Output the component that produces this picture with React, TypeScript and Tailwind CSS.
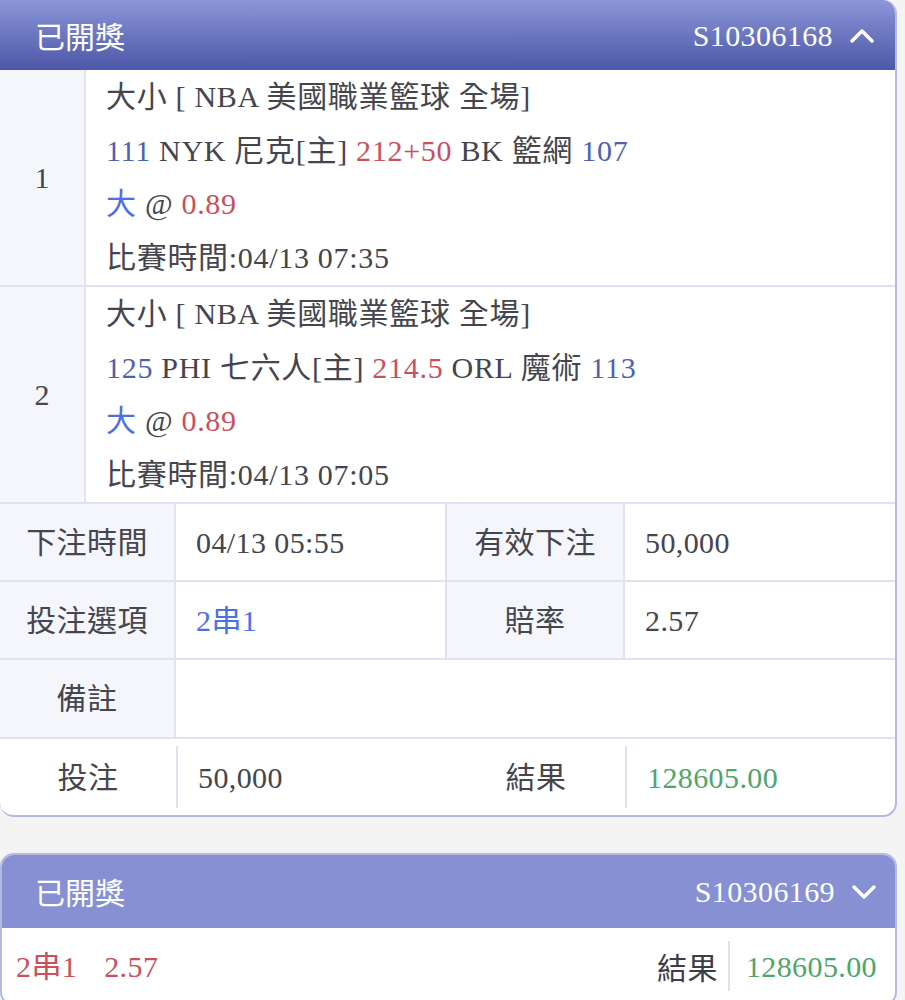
import React from "react";

const F = { fontFamily: '"Liberation Serif", "Noto Sans CJK TC", serif' };
const CJK = { fontFamily: '"Noto Sans CJK TC", sans-serif' };

function Up() {
  return (
    <svg width="26" height="18" viewBox="0 0 26 18" fill="none">
      <path d="M3 15 L13 5 L23 15" stroke="white" strokeWidth="3.5" strokeLinecap="round" strokeLinejoin="round" />
    </svg>
  );
}
function Down() {
  return (
    <svg width="26" height="18" viewBox="0 0 26 18" fill="none">
      <path d="M3 4 L13 14 L23 4" stroke="white" strokeWidth="3.5" strokeLinecap="round" strokeLinejoin="round" />
    </svg>
  );
}

function Match({ n, lines }: { n: string; lines: React.ReactNode[] }) {
  return (
    <div className="flex h-[217px] border-b-2 border-[#dfe1f1]">
      <div className="w-[86px] shrink-0 bg-[#f5f6fb] border-r-2 border-[#e2e4f3] flex items-center justify-center text-[30px] text-[#45454e]">
        {n}
      </div>
      <div className="flex-1 pl-[20px] text-[30px] tracking-[0.7px] text-[#45454e]">
        {lines.map((l, i) => (
          <div key={i} className="h-[53.5px] leading-[53.5px] whitespace-nowrap">{l}</div>
        ))}
      </div>
    </div>
  );
}

const blue = "text-[#4f5fb3]";
const red = "text-[#c9505c]";
const bright = "text-[#4b6fe4]";
const lineImg =
  "[border-image:linear-gradient(to_bottom,transparent_10%,#dfe1f1_10%,#dfe1f1_90%,transparent_90%)_1]";

export default function App() {
  return (
    <div className="min-h-[1000px] bg-[#f4f4f5] pr-[8px] overflow-hidden" style={F}>
      <div className="bg-white rounded-b-[14px] rounded-tr-[14px] border-r-2 border-b-2 border-[#b4b9e0] overflow-hidden">
        <div className="h-[70px] flex items-center justify-between pl-[35px] pr-[20px] bg-gradient-to-b from-[#8c96d8] to-[#4d57a7] text-white">
          <span className="text-[30px]" style={CJK}>已開獎</span>
          <span className="flex items-center gap-[16px] text-[30px] tracking-[0.4px]">S10306168 <Up /></span>
        </div>
        <Match
          n="1"
          lines={[
            <>大小 [ NBA 美國職業籃球 全場]</>,
            <><span className={blue}>111</span> NYK 尼克[主] <span className={red}>212+50</span> BK 籃網 <span className={blue}>107</span></>,
            <><span className={bright}>大</span> @ <span className={red}>0.89</span></>,
            <>比賽時間:04/13 07:35</>,
          ]}
        />
        <Match
          n="2"
          lines={[
            <>大小 [ NBA 美國職業籃球 全場]</>,
            <><span className={blue}>125</span> PHI 七六人[主] <span className={red}>214.5</span> ORL 魔術 <span className={blue}>113</span></>,
            <><span className={bright}>大</span> @ <span className={red}>0.89</span></>,
            <>比賽時間:04/13 07:05</>,
          ]}
        />
        <div className="grid grid-cols-[176px_271px_178px_1fr] text-[30px] tracking-[0.4px] text-[#45454e]">
          <div className="h-[78px] bg-[#f5f6fb] border-r-2 border-b-2 border-[#e0e2f2] flex items-center justify-center">下注時間</div>
          <div className="h-[78px] border-r-2 border-b-2 border-[#e0e2f2] flex items-center pl-[20px]">04/13 05:55</div>
          <div className="h-[78px] bg-[#f5f6fb] border-r-2 border-b-2 border-[#e0e2f2] flex items-center justify-center">有效下注</div>
          <div className="h-[78px] border-b-2 border-[#e0e2f2] flex items-center pl-[20px]">50,000</div>

          <div className="h-[78px] bg-[#f5f6fb] border-r-2 border-b-2 border-[#e0e2f2] flex items-center justify-center">投注選項</div>
          <div className={`h-[78px] border-r-2 border-b-2 border-[#e0e2f2] flex items-center pl-[20px] ${bright}`}>2串1</div>
          <div className="h-[78px] bg-[#f5f6fb] border-r-2 border-b-2 border-[#e0e2f2] flex items-center justify-center">賠率</div>
          <div className="h-[78px] border-b-2 border-[#e0e2f2] flex items-center pl-[20px]">2.57</div>

          <div className="h-[79px] bg-[#f5f6fb] border-r-2 border-b-2 border-[#e0e2f2] flex items-center justify-center">備註</div>
          <div className="h-[79px] col-span-3 border-b-2 border-[#e0e2f2]"></div>

          <div className="h-[76px] flex items-center justify-center">投注</div>
          <div className={`h-[76px] flex items-center pl-[20px] border-l-2 ${lineImg}`}>50,000</div>
          <div className="h-[76px] flex items-center justify-center">結果</div>
          <div className={`h-[76px] flex items-center pl-[20px] border-l-2 text-[#4ea56c] ${lineImg}`}>128605.00</div>
        </div>
      </div>

      <div className="mt-[36px] bg-white rounded-[14px] border-2 border-[#b4b9e0] overflow-hidden">
        <div className="h-[73px] flex items-center justify-between pl-[33px] pr-[18px] bg-[#8690d3] text-white">
          <span className="text-[30px]" style={CJK}>已開獎</span>
          <span className="flex items-center gap-[16px] text-[30px] tracking-[0.4px]">S10306169 <Down /></span>
        </div>
        <div className="h-[76px] flex items-center justify-between pl-[14px] pr-[18px] text-[30px] tracking-[0.4px]">
          <span className={red}>2串1<span className="ml-[27px]">2.57</span></span>
          <span className="flex items-center">
            <span className="text-[#3d3d47] pr-[10px]" style={CJK}>結果</span>
            <span className="h-[50px] border-l-2 border-[#dfe1f1] mr-[16px]"></span>
            <span className="text-[#4ea56c]">128605.00</span>
          </span>
        </div>
      </div>
    </div>
  );
}
